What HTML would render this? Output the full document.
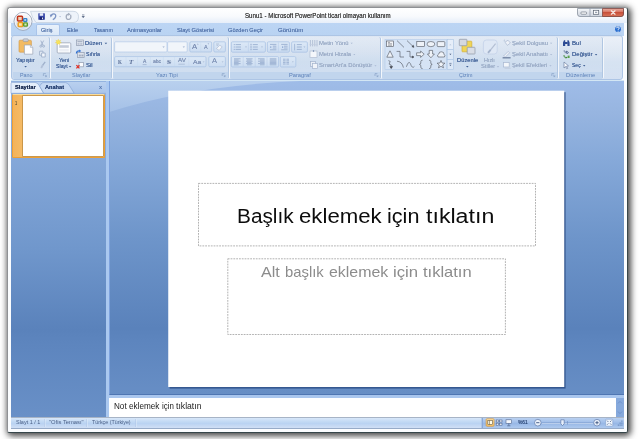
<!DOCTYPE html>
<html><head><meta charset="utf-8"><title>Sunu1 - Microsoft PowerPoint</title>
<style>
*{margin:0;padding:0;box-sizing:border-box}
html,body{width:640px;height:439px;overflow:hidden;background:#fff;font-family:"Liberation Sans","DejaVu Sans",sans-serif}
#root{position:relative;width:640px;height:439px;background:#fff;overflow:hidden}
.a{position:absolute}
.t{position:absolute;white-space:nowrap;line-height:1;transform-origin:0 50%;display:block}
.s{text-shadow:0 0 .6px currentColor}
#shadow{left:7px;top:7px;width:621px;height:426px;border-radius:4px;box-shadow:1.250px 1.250px 6px 1px rgba(0,0,0,.72)}
#win{left:7px;top:7px;width:621px;height:426px;border-radius:3px 3px 2px 2px;background:#fbfdff;border:1px solid;border-color:#8f9194 #3a484b #36464a #8f9194}
#title{left:8px;top:8px;width:619px;height:15px;border-radius:3px 3px 0 0;background:linear-gradient(#ffffff 0%,#f8fafd 55%,#e6eef9 100%)}
#tabs{left:11px;top:23px;width:613px;height:13px;background:linear-gradient(#bcd5f4,#b9d3f2)}
#acttab{left:36px;top:24px;width:24px;height:12px;border:1px solid #a9c4ea;border-bottom:none;border-radius:2px 2px 0 0;background:linear-gradient(#e9f1fb,#d9e7f7)}
#ribbon{left:11px;top:35px;width:612px;height:45px;background:linear-gradient(#dee7f3 0%,#d4e0ef 35%,#cbdbee 60%,#cfddf0 100%);border:1px solid #adc5e5;border-radius:3px}
.grp{position:absolute;top:37px;height:42px;border-radius:2px;background:linear-gradient(rgba(255,255,255,.15),rgba(255,255,255,.03));border-right:1px solid #b0c6e2;box-shadow:1px 0 0 rgba(255,255,255,.75)}
.glab{position:absolute;top:72px;height:7px;background:#c1d5ed;border-radius:0 0 2px 2px}
#below{left:11px;top:80px;width:613px;height:1px;background:#d3e6f4}
#leftpane{left:11px;top:81px;width:95px;height:336px;background:linear-gradient(#93b3e0 0%,#85a8d9 23%,#7097cc 50%,#5a82bb 74%,#5d85be 78%,#6990c7 100%)}
#ptabs{left:11px;top:82px;width:95px;height:12px;background:linear-gradient(#b9d0ef,#a9c4ea)}
#split{left:106px;top:81px;width:3px;height:336px;background:#aac8f0}
#leftframe{left:8px;top:23px;width:3px;height:406px;background:#fbfdff}
#main{left:109px;top:81px;width:515px;height:314px;border-left:1px solid #7da2de;border-bottom:1px solid #4f76b2;background:linear-gradient(#9fbce8 0%,#97b5e0 10%,#86a9d9 25%,#6e95ca 50%,#5a82bb 79%,#5d85be 83%,#678ec5 100%);overflow:hidden}
#mainhi{left:0;top:0;width:200px;height:32px}
#slide{left:160px;top:84px;width:412px;height:310px}
.ph{position:absolute;border:1px dotted #a2a2a2}
#notesbar{left:109px;top:395px;width:515px;height:3px;background:#a9c6ee}
#notes{left:110px;top:398px;width:506px;height:19px;background:#fff}
#nscroll{left:616px;top:398px;width:8px;height:19px;background:#86a9dc}
#status{left:11px;top:417px;width:613px;height:12px;border-top:1px solid #a7b4c6;border-bottom:1px solid #97abc8;background:linear-gradient(#d8e7f9 0%,#c3daf4 35%,#bad3f2 55%,#d0dff5 100%)}
#thumbsel{left:12px;top:94px;width:93px;height:64px;border-radius:1.500px;background:linear-gradient(90deg,#f4b35a,#f5bc68 12%,#f8cc86 100%);border:1px solid #ee9f34;border-top-color:#f8dc9c}
#thumb{left:23px;top:96px;width:80px;height:60px;background:#fff;box-shadow:0 0 0 .7px #b8863c}
svg#ic{position:absolute;left:0;top:0;width:640px;height:439px}
#statusr{left:482px;top:418px;width:142px;height:10px;background:linear-gradient(#bad1f1 0%,#a3c0ea 40%,#98b8e6 55%,#aec9ee 100%);border-left:1px solid #8aa9d8}
#ribr{left:604px;top:37px;width:18px;height:42px;background:linear-gradient(rgba(255,255,255,.38),rgba(255,255,255,.12));border-radius:0 2px 2px 0}
#texts{position:absolute;left:0;top:0;width:640px;height:439px;filter:blur(.4px)}
svg#ic{filter:blur(.35px)}

</style></head><body><div id="root">
<div class="a" id="shadow"></div>
<div class="a" id="win"></div>
<div class="a" id="title"></div>
<div class="a" id="tabs"></div>
<div class="a" id="acttab"></div>
<div class="a" id="leftframe"></div>
<div class="a" id="ribbon"></div>
<div class="grp" style="left:13px;width:37px"></div>
<div class="grp" style="left:51px;width:61px"></div>
<div class="grp" style="left:113px;width:116px"></div>
<div class="grp" style="left:230px;width:151px"></div>
<div class="grp" style="left:382px;width:176px"></div>
<div class="grp" style="left:559px;width:44px"></div>
<div class="glab" style="left:13px;width:36px"></div>
<div class="glab" style="left:51px;width:60px"></div>
<div class="glab" style="left:113px;width:115px"></div>
<div class="glab" style="left:230px;width:150px"></div>
<div class="glab" style="left:382px;width:175px"></div>
<div class="glab" style="left:559px;width:43px"></div>
<div class="a" id="ribr"></div>
<div class="a" id="below"></div>
<div class="a" id="leftpane"></div>
<div class="a" id="ptabs"></div>
<div class="a" id="split"></div>
<div class="a" id="main"><svg class="a" id="mainhi" viewBox="0 0 200 32"><defs><linearGradient id="gHi" x1="0" y1="0" x2="0" y2="1"><stop offset="0" stop-color="#b9d0ee"/><stop offset="1" stop-color="#a5c1e7"/></linearGradient></defs><path d="M0 0 V30.800 Q80 5 190 0 Z" fill="url(#gHi)"/></svg></div>
<svg class="a" id="slide" viewBox="160 84 412 310"><defs><filter id="fS" x="-5%" y="-5%" width="110%" height="110%"><feGaussianBlur stdDeviation=".7"/></filter></defs><rect x="169.600" y="92.200" width="396" height="296.400" fill="#2f4f88" opacity=".85" filter="url(#fS)"/><rect x="168.250" y="90.700" width="396" height="296.300" fill="#fff"/><g fill="none" stroke="#999" stroke-width=".75" stroke-dasharray="1.800 1"><rect x="198.500" y="183.400" width="337" height="62.500"/><rect x="227.800" y="258.800" width="277.600" height="75.700"/></g></svg>
<div class="a" id="notesbar"></div>
<div class="a" id="notes"></div>
<div class="a" id="nscroll"></div>
<div class="a" id="status"></div>
<div class="a" id="statusr"></div>
<div class="a" id="thumbsel"></div>
<div class="a" id="thumb"></div>
<svg id="ic" viewBox="0 0 640 439">
<defs>
<linearGradient id="gOrb" x1="0" y1="0" x2="0" y2="1"><stop offset="0" stop-color="#ffffff"/><stop offset=".5" stop-color="#e4e8ef"/><stop offset="1" stop-color="#c9d3e4"/></linearGradient>
<linearGradient id="gClose" x1="0" y1="0" x2="0" y2="1"><stop offset="0" stop-color="#e8b0a4"/><stop offset=".45" stop-color="#d87360"/><stop offset=".5" stop-color="#c8503a"/><stop offset="1" stop-color="#d8745a"/></linearGradient>
<linearGradient id="gCap" x1="0" y1="0" x2="0" y2="1"><stop offset="0" stop-color="#f6f8fa"/><stop offset=".5" stop-color="#e0e4ea"/><stop offset="1" stop-color="#cfd5df"/></linearGradient>
<linearGradient id="gBtn" x1="0" y1="0" x2="0" y2="1"><stop offset="0" stop-color="#dde9f7"/><stop offset="1" stop-color="#cbdcf1"/></linearGradient>
<linearGradient id="gOr" x1="0" y1="0" x2="0" y2="1"><stop offset="0" stop-color="#fce7b2"/><stop offset="1" stop-color="#f6c870"/></linearGradient>
</defs>
<!-- caption buttons -->
<g>
<path d="M577.5 8.5 H623.5 V14 Q623.5 16.5 621 16.5 H580 Q577.5 16.5 577.5 14 Z" fill="url(#gCap)" stroke="#7c8694" stroke-width=".7"/>
<path d="M602.5 8.5 H623.5 V14 Q623.5 16.5 621 16.5 H602.5 Z" fill="url(#gClose)" stroke="#7a3a30" stroke-width=".7"/>
<line x1="590" y1="8.5" x2="590" y2="16.5" stroke="#8a94a3" stroke-width=".7"/>
<rect x="581" y="12" width="5.5" height="2.2" rx=".6" fill="#fff" stroke="#5b6472" stroke-width=".6"/>
<rect x="593.5" y="10.3" width="5.2" height="4" fill="#fff" stroke="#5b6472" stroke-width=".7"/>
<rect x="595" y="11.7" width="2.2" height="1.4" fill="#9aa3b2"/>
<path d="M611.400 10.800 L615 14.200 M615 10.800 L611.400 14.200" stroke="#f7ecea" stroke-width="1.250" stroke-linecap="round"/>
</g>
<!-- quick access toolbar -->
<path d="M30.500 11.300 H73 Q78.500 11.300 78.500 16.800 Q78.500 22.500 73 22.500 H36 Q32 18 30.500 11.300 Z" fill="#eef3fa" stroke="#bfcbdb" stroke-width=".7"/>
<g>
<rect x="38.3" y="13.2" width="6.6" height="6.6" rx=".6" fill="#3546a8"/>
<rect x="39.6" y="13.2" width="3.6" height="2.6" fill="#e8ecf8"/>
<rect x="39.8" y="17" width="3.6" height="2.8" fill="#1c2470"/>
<rect x="42" y="17.5" width="1" height="1.8" fill="#dfe4f4"/>
</g>
<path d="M51 16.2 Q51.5 13.6 54 13.8 Q56.2 14.2 55.6 16.8 Q55 18.8 52.8 19.6" fill="none" stroke="#7b93c4" stroke-width="1.3"/>
<path d="M49.8 14.6 L52.6 15 L50.6 17.6 Z" fill="#7b93c4"/>
<path d="M59.3 16.2 h1.6 l-.8 1 z" fill="#8c9dbd"/>
<path d="M70.6 15 Q71.6 18.6 69 19.4 Q66.4 19.8 66.2 17 Q66.2 14.6 68.4 14.2" fill="none" stroke="#a3acbd" stroke-width="1.3"/>
<path d="M68 12.8 L70.8 14.2 L68.2 15.8 Z" fill="#a3acbd"/>
<path d="M82 14.8 h2.4 M82 16.2 h2.4 l-1.2 1.5 z" stroke="#4a5a78" stroke-width=".5" fill="#4a5a78"/>
<!-- office orb -->
<circle cx="23" cy="21.400" r="9" fill="url(#gOrb)" stroke="#9aa5b8" stroke-width=".9"/>
<circle cx="23" cy="21.400" r="7.900" fill="none" stroke="#fff" stroke-width=".7" opacity=".85"/>
<g>
<rect x="17.500" y="16.300" width="5" height="4.600" rx=".8" fill="#f3d2b8" stroke="#c2351a" stroke-width="1.500"/>
<rect x="23.600" y="18.700" width="3.200" height="2.600" rx=".6" fill="#cfe3f4" stroke="#3583c9" stroke-width="1.300"/>
<rect x="18.200" y="22.400" width="4.400" height="4.200" rx=".8" fill="#fbe7b4" stroke="#eea020" stroke-width="1.500"/>
<rect x="23.700" y="22.900" width="3.600" height="3.200" rx=".7" fill="#d6ecb8" stroke="#5d9a2a" stroke-width="1.400"/>
</g>
<!-- help -->
<circle cx="618" cy="29.2" r="3.6" fill="#2a6fd0" stroke="#e7effa" stroke-width=".8"/>
<path d="M616.6 28.2 Q616.8 26.8 618.1 26.9 Q619.5 27.1 619.2 28.3 Q618.9 29.1 618.1 29.5 V30.3 M618.1 31.1 v.7" stroke="#fff" stroke-width=".9" fill="none"/>
<!-- Paste -->
<g>
<rect x="19" y="40.200" width="12.400" height="12" rx="1" fill="#f3bb62" stroke="#cf9644" stroke-width=".6"/>
<rect x="23.2" y="38.8" width="5" height="2.8" rx=".8" fill="#c9ced8" stroke="#8b93a3" stroke-width=".5"/>
<path d="M24.4 45 H30.4 L32.8 47.4 V54.2 H24.4 Z" fill="#fdfdfe" stroke="#9aa3b4" stroke-width=".7"/>
<path d="M30.4 45 V47.4 H32.8" fill="#e3e7ee" stroke="#9aa3b4" stroke-width=".5"/>
<path d="M24.3 66 h2.6 l-1.3 1.5 z" fill="#3f5f94"/>
</g>
<!-- cut copy painter (disabled) -->
<g stroke="#9fb0cb" fill="none" stroke-width=".9">
<path d="M40.8 40.6 L43 45.4 M43.6 40.6 L41.2 45.4"/>
<circle cx="40.8" cy="46.2" r="1"/><circle cx="43.6" cy="46.2" r="1"/>
<path d="M39.6 51.2 h3.4 v4 h-3.4 z" fill="#e6edf7"/><path d="M41.6 53 h3.6 v4 h-3.6 z" fill="#f2f6fb"/>
<path d="M45.2 61.8 L42.6 65.4" stroke-width="1.4"/><path d="M42.8 65 L41.2 68" stroke-width="1.8" stroke="#b3c1d8"/>
</g>
<!-- launcher icons -->
<g stroke="#7f98c0" fill="none" stroke-width=".6">
<path d="M43.4 73.6 h2.4 M43.4 73.6 v2.4 M44.8 75 l1.4 1.4 M46.4 75.2 v1.4 h-1.4"/>
<path d="M222.2 73.6 h2.4 M222.2 73.6 v2.4 M223.6 75 l1.4 1.4 M225.2 75.2 v1.4 h-1.4"/>
<path d="M375 73.6 h2.4 M375 73.6 v2.4 M376.4 75 l1.4 1.4 M378 75.2 v1.4 h-1.4"/>
<path d="M551.8 73.6 h2.4 M551.8 73.6 v2.4 M553.2 75 l1.4 1.4 M554.8 75.2 v1.4 h-1.4"/>
</g>
<!-- New slide -->
<g>
<rect x="57.2" y="42.8" width="13.6" height="10.2" rx="1" fill="#fbfcfe" stroke="#9aa5b8" stroke-width=".8"/>
<rect x="59.2" y="45.2" width="9.6" height="2.6" fill="#c4cbd8"/>
<rect x="59.2" y="49" width="9.6" height="2.4" fill="#eceff5"/>
<path transform="translate(58.300 42.300) scale(.8) translate(-58.400 -43)" d="M58.4 39.2 l.9 2 l2.1 -.7 l-1 1.9 l1.8 1.2 l-2.2 .4 l.1 2.2 l-1.7 -1.5 l-1.7 1.5 l.1 -2.2 l-2.2 -.4 l1.8 -1.2 l-1 -1.9 l2.1 .7 z" fill="#f7e35c" stroke="#e8cb38" stroke-width=".4"/>
<path d="M68.8 66 h2.6 l-1.3 1.5 z" fill="#3f5f94"/>
</g>
<!-- Düzen -->
<g>
<rect x="76.4" y="40" width="7" height="5.6" fill="#e7ebf2" stroke="#8f9bb0" stroke-width=".7"/>
<rect x="77.4" y="41" width="5" height="1.2" fill="#a9b3c6"/>
<rect x="77.4" y="42.8" width="2.2" height="2" fill="#b9c2d3"/><rect x="80.2" y="42.8" width="2.2" height="2" fill="#b9c2d3"/>
<path d="M104.6 42.8 h2.6 l-1.3 1.5 z" fill="#3f5f94"/>
</g>
<!-- Sıfırla -->
<g>
<rect x="77.6" y="52.4" width="6.6" height="5" fill="#dfe4ec" stroke="#8f9bb0" stroke-width=".7"/>
<rect x="78.8" y="54.6" width="2" height="1.8" fill="#9fa9bc"/><rect x="81.4" y="54.6" width="2" height="1.8" fill="#9fa9bc"/>
<path d="M76.4 53.6 Q76.4 50.6 79.6 50.8" fill="none" stroke="#2d6fd2" stroke-width="1.2"/>
<path d="M79.2 49.6 L81.2 50.9 L79.2 52.2 Z" fill="#2d6fd2"/>
</g>
<!-- Sil -->
<g>
<rect x="79" y="62.6" width="4.6" height="4.2" fill="#fbfcfe" stroke="#8f9bb0" stroke-width=".7"/>
<path d="M76.4 65.2 L79.4 68.4 M79.4 65.2 L76.4 68.4" stroke="#e02a1e" stroke-width="1.2"/>
</g>
<!-- Font group boxes -->
<g fill="#f1f5fa" stroke="#b1c8e6" stroke-width=".7">
<rect x="114.6" y="41.8" width="52.4" height="10.2" rx="1"/>
<rect x="167.6" y="41.8" width="19.6" height="10.2" rx="1"/>
</g>
<path d="M162.4 46.4 h2.4 l-1.2 1.4 z M182.6 46.4 h2.4 l-1.2 1.4 z" fill="#9aaccb"/>
<g fill="url(#gBtn)" stroke="#a6c0e2" stroke-width=".7">
<rect x="189.8" y="41.8" width="21.8" height="10.2" rx="1.2"/>
<rect x="213.8" y="41.8" width="11.6" height="10.2" rx="1.2"/>
<rect x="114.6" y="56.6" width="91.4" height="10.2" rx="1.2"/>
<rect x="208.8" y="56.6" width="16.6" height="10.2" rx="1.2"/>
</g>
<g stroke="#c3d6ee" stroke-width=".4">
<path d="M200.7 42.4 v9 M126 57.2 v9 M137.6 57.2 v9 M150.4 57.2 v9 M163.4 57.2 v9 M174.6 57.2 v9 M188.8 57.2 v9"/>
</g>
<path d="M142.6 64.6 h4" stroke="#8fa3c2" stroke-width=".6"/>
<path d="M154 62 h7 M166.8 62 h4.6 M178.4 64.2 h6.4" stroke="#8fa3c2" stroke-width=".5"/>
<path d="M197.8 43.4 l.9 1.2 h-1.8 z M208.4 44.6 l-.9 -1.2 h1.8 z" fill="#8fa3c2"/>
<path d="M202.6 61.4 h2 l-1 1.2 z M221.6 61.4 h2 l-1 1.2 z" fill="#a5b6d2"/>
<path d="M216.4 48.6 l3.4 -3.4 l2.4 1.6 l-3 3.6 z" fill="#f2f5fa" stroke="#a9b7cf" stroke-width=".6"/>
<path d="M216 44 h3 M216.6 45.4 h1.6" stroke="#9fb0cb" stroke-width=".6"/>
<!-- Paragraph boxes -->
<g fill="url(#gBtn)" stroke="#a6c0e2" stroke-width=".7">
<rect x="231.4" y="41.8" width="34" height="10.4" rx="1.2"/>
<rect x="267.4" y="41.8" width="22" height="10.4" rx="1.2"/>
<rect x="291.6" y="41.8" width="15.8" height="10.4" rx="1.2"/>
<rect x="231.4" y="56.6" width="47.2" height="10.4" rx="1.2"/>
<rect x="280.4" y="56.6" width="15.4" height="10.4" rx="1.2"/>
</g>
<g stroke="#b4c9e6" stroke-width=".5"><path d="M248.4 42.4 v9.2 M278.4 42.4 v9.2 M243.2 57.2 v9.2 M255.2 57.2 v9.2 M267 57.2 v9.2"/></g>
<g stroke="#92a8cb" stroke-width=".8">
<path d="M235.6 44.6 h5.4 M235.6 47 h5.4 M235.6 49.4 h5.4 M252.8 44.6 h5 M252.8 47 h5 M252.8 49.4 h5"/>
<path d="M233.8 44.6 h.9 M233.8 47 h.9 M233.8 49.4 h.9 M251 43.8 v1.6 M251 46.2 v1.6 M251 48.6 v1.6" stroke="#7f97c0"/>
<path d="M270 44.4 h6.4 M272.8 46.2 h3.6 M272.8 48 h3.6 M270 49.8 h6.4 M281.2 44.4 h6.4 M284 46.2 h3.6 M284 48 h3.6 M281.2 49.8 h6.4"/>
<path d="M296.8 44.6 h5 M296.8 47 h5 M296.8 49.4 h5"/>
<path d="M294.6 43.8 v6.6" stroke-width=".7"/>
<path d="M234 58.800 h6.600 M234 60 h4.600 M234 61.200 h6.600 M234 62.400 h4.600 M234 63.600 h6.600 M234 64.800 h4.600"/>
<path d="M246 58.800 h6.600 M247 60 h4.600 M246 61.200 h6.600 M247 62.400 h4.600 M246 63.600 h6.600 M247 64.800 h4.600"/>
<path d="M258 58.800 h6.600 M260 60 h4.600 M258 61.200 h6.600 M260 62.400 h4.600 M258 63.600 h6.600 M260 64.800 h4.600"/>
<path d="M269.800 58.800 h6.600 M269.800 60 h6.600 M269.800 61.200 h6.600 M269.800 62.400 h6.600 M269.800 63.600 h6.600 M269.800 64.800 h6.600"/>
<path d="M283 59.2 h2.6 M283 60.8 h2.6 M283 62.4 h2.6 M283 64 h2.6 M286.4 59.2 h2.6 M286.4 60.8 h2.6 M286.4 62.4 h2.6 M286.4 64 h2.6"/>
</g>
<path d="M271.2 46.2 v1.8 l-1.4 -.9 z M282.2 46.2 v1.8 l1.4 -.9 z" fill="#6f8cc0"/>
<path d="M245 46.6 h2 l-1 1.2 z M261 46.6 h2 l-1 1.2 z M303.4 46.6 h2 l-1 1.2 z M291.8 61.4 h2 l-1 1.2 z" fill="#a5b6d2"/>
<!-- text direction etc icons (disabled) -->
<g stroke="#a3b3cc" fill="none" stroke-width=".7">
<path d="M310.4 40 v6.4 M312.6 40 v6.4 M314.8 40 v6.4 M317 40 v6.4" />
<path d="M309.6 44.6 h8.2" stroke="#c1cde0"/>
<rect x="310" y="51" width="7" height="6.6" fill="#f4f7fb" stroke="#b0bdd2"/>
<path d="M313.5 50 v2" stroke="#8ea0bf" stroke-width="1.2"/>
<rect x="310.6" y="61.6" width="5" height="5" fill="#e9eef6"/><rect x="312.6" y="63.6" width="5" height="5" fill="#f1f4f9"/>
</g>
<path d="M350.6 42.8 h2.2 l-1.1 1.3 z M353.2 54 h2.2 l-1.1 1.3 z M374.4 65.2 h2.2 l-1.1 1.3 z" fill="#a9b9d3"/>
<!-- shapes gallery -->
<rect x="385" y="39.4" width="61.6" height="30" fill="#d5e3f5" stroke="#b4cbe8" stroke-width=".6"/>
<g stroke="#50555f" fill="none" stroke-width=".62">
<rect x="386.6" y="41" width="6.8" height="5.6" fill="#f3f5f8"/><path d="M388 42.4 h2 M388 43.8 h4 M388 45.2 h4" stroke-width=".5"/>
<path d="M397 40.6 L404 47.4"/>
<path d="M407 40.6 L413.6 47"/><path d="M413.9 47.3 l-2 -.6 l1.4 -1.4 z" fill="#33363e"/>
<rect x="416.8" y="41.6" width="7.6" height="5" fill="#eef2f8"/>
<ellipse cx="430.9" cy="44.1" rx="3.9" ry="2.6" fill="#eef2f8"/>
<rect x="437.2" y="41.6" width="7.6" height="5" rx=".8" fill="#eef2f8"/>
<path d="M390 50.8 L393.2 57.2 H386.8 Z" fill="#eef2f8"/>
<path d="M396.6 51.4 h3.4 v5.6 h4"/>
<path d="M406.6 51.4 h3.4 v5.6 h3.2"/><path d="M414 57 l-1.8 -1 v2 z" fill="#33363e"/>
<path d="M416.6 52.8 h4 v-1.8 l3.6 3.2 l-3.6 3.2 v-1.8 h-4 z" fill="#eef2f8"/>
<path d="M429.2 50.4 h3.4 v3.6 h1.8 l-3.5 3.8 l-3.5 -3.8 h1.8 z" fill="#eef2f8"/>
<path d="M438 57 q-1.4 -2.4 .8 -3 q.2 -2.6 2.8 -2.2 q2.600 .2 2.400 2.400 q1.600 1.200 .4 2.800 z" fill="#eef2f8"/>
<path d="M388.400 60.600 q3 .6 1.200 2.200 q-1.800 1.600 1.600 2.200 v2.600"/><path d="M391.200 68.600 l-1.400 -2.200 h2.800 z" fill="#33363e"/>
<path d="M397 61.200 q5.200 .4 6.400 6.400"/>
<path d="M406.400 66.800 q2.200 -6.600 4 -3.200 q1.800 5.600 4 2.800"/>
<path d="M422.600 60.200 q-1.800 0 -1.800 1.400 v1.400 q0 1.200 -1.400 1.400 q1.400 .2 1.400 1.400 v1.400 q0 1.400 1.800 1.400"/>
<path d="M429 60.200 q1.800 0 1.800 1.400 v1.400 q0 1.200 1.400 1.400 q-1.400 .2 -1.400 1.400 v1.400 q0 1.400 -1.800 1.400"/>
<path d="M441 60.400 l1.100 2.600 l2.800 .2 l-2.200 1.800 l.8 2.800 l-2.500 -1.500 l-2.500 1.500 l.8 -2.800 l-2.200 -1.800 l2.800 -.2 z" fill="#eef2f8"/>
</g>
<g fill="#dce8f7" stroke="#a9c3e3" stroke-width=".6">
<rect x="447.200" y="39.400" width="6.400" height="10" fill="#e6eef9"/><rect x="447.200" y="49.400" width="6.400" height="10"/><rect x="447.200" y="59.400" width="6.400" height="10"/>
</g>
<path d="M449.300 45.200 h2.200 l-1.100 -1.300 z" fill="#b9c6da"/>
<path d="M449.300 53.800 h2.200 l-1.100 1.300 z M449.300 64.800 h2.200 l-1.100 1.300 z" fill="#46597d"/><path d="M449.300 63.400 h2.200" stroke="#46597d" stroke-width=".6"/>
<!-- Düzenle icon -->
<g stroke-width=".7">
<rect x="462" y="41.200" width="9.800" height="10.600" rx=".6" fill="#f0d556" stroke="#d3ad34"/>
<rect x="459.300" y="39.300" width="7.600" height="6.400" rx=".6" fill="#d5d9e1" stroke="#8d95a5"/>
<rect x="467.200" y="47.300" width="7.800" height="6.700" rx=".6" fill="#d9dde5" stroke="#8d95a5"/>
</g>
<path d="M466 66 h2.600 l-1.300 1.500 z" fill="#3f5f94"/>
<!-- Hızlı stiller -->
<rect x="483.400" y="40" width="13.800" height="14" rx="3" fill="#dfe8f5" stroke="#c0cfe6" stroke-width=".7"/>
<path d="M495.600 43.600 L490.400 50.200" stroke="#b4c0d4" stroke-width="1.200"/><path d="M490.600 49.800 L488 52.800" stroke="#a3b2cb" stroke-width="1.800"/>
<path d="M496.800 66.200 h2.400 l-1.200 1.400 z" fill="#a3b4cf"/>
<!-- shape fill / outline / effects icons -->
<g stroke="#a9b8d0" fill="#eef2f8" stroke-width=".7">
<path d="M505 42.200 l3 -2 l2.400 2.800 l-3 2.400 z"/><path d="M504.400 41.600 q-1 -1.600 .6 -1.800" fill="none"/>
<path d="M503.600 56 l4.600 -4.600 l1.400 1.400 l-4.600 4.600 z"/>
<rect x="503.600" y="62.600" width="5.600" height="4.400" fill="#f3f6fa"/>
</g>
<path d="M502.600 57.800 h8" stroke="#6d7f9f" stroke-width="1.300"/>
<path d="M504.600 68.200 h6" stroke="#c0cadb" stroke-width="1"/>
<path d="M550 42.800 h2.200 l-1.100 1.300 z M550 54 h2.200 l-1.100 1.300 z M549.400 65.200 h2.200 l-1.100 1.300 z" fill="#a9b9d3"/>
<!-- Bul / Değiştir / Seç -->
<g>
<path d="M563 46 v-3.400 l1 -2.400 h1.200 v5.800 z M569.600 46 v-3.400 l-1 -2.400 h-1.200 v5.800 z" fill="#2b4a94"/><rect x="565" y="42" width="2.600" height="2" fill="#2b4a94"/>
<path d="M563.600 51 q1.400 -.6 1.600 .8 v1.400 M566.600 50.800 v2.600 q1.800 .4 1.800 -1 q-.2 -1 -1.800 -.6" stroke="#32487a" stroke-width=".7" fill="none"/>
<path d="M564 55 q-.6 2.400 1.800 2.600" stroke="#3f8a36" stroke-width=".9" fill="none"/><path d="M565.600 56.400 l2 1.200 l-2 1.200 z" fill="#3f8a36"/>
<path d="M567.600 55.600 h2 v2.400 h-2 z" fill="#5aa04c"/>
<path d="M564 62 v6 l1.600 -1.400 l1.200 2.200 l.9 -.5 l-1.200 -2.100 l2 -.3 z" fill="#fafbfd" stroke="#5d6f95" stroke-width=".6"/>
<path d="M594.900 54 h2.400 l-1.200 1.400 z M583 65 h2.400 l-1.200 1.400 z" fill="#3f5f94"/>
</g>
<!-- pane tabs -->
<path d="M11 93.400 V83.600 Q11 82.400 12.400 82.400 H35 Q37.400 82.600 39 85.200 L43.800 93.400 Z" fill="#e4eefa" stroke="#7f9fd0" stroke-width=".6"/>
<path d="M39.600 86 L42 83 Q42.600 82.600 44 82.600 H65.600 Q67.800 82.800 69.400 85.400 L74.200 93.400 H43.800 Z" fill="#c6d9f3" stroke="#7f9fd0" stroke-width=".6"/>
<path d="M11 93.400 H106" stroke="#86a6d6" stroke-width=".7"/>
<!-- notes scrollbar arrows -->
<path d="M618 403.400 l2 -2 l2 2 M618 411.600 l2 2 l2 -2" stroke="#6d90c9" stroke-width=".9" fill="none"/>
<!-- status separators -->
<g stroke="#9db9df" stroke-width=".6"><path d="M44.500 419 v8 M86.700 419 v8 M135.700 419 v8 M481.500 418 v10"/></g>
<g stroke="#eaf2fc" stroke-width=".6"><path d="M45.100 419 v8 M87.300 419 v8 M136.300 419 v8"/></g>
<!-- view buttons -->
<rect x="486.200" y="418.800" width="7.800" height="7.400" rx=".8" fill="url(#gOr)" stroke="#d9922b" stroke-width=".7"/>
<rect x="487.800" y="420.400" width="4.800" height="4.200" fill="#fffbe9" stroke="#6b5a3a" stroke-width=".6"/><path d="M489.400 420.400 v4.200" stroke="#6b5a3a" stroke-width=".6"/>
<g fill="#f3f7fc" stroke="#4f648d" stroke-width=".6">
<rect x="496.200" y="420" width="2.400" height="2"/><rect x="499.600" y="420" width="2.400" height="2"/><rect x="496.200" y="423.200" width="2.400" height="2"/><rect x="499.600" y="423.200" width="2.400" height="2"/>
<rect x="506" y="419.800" width="5.600" height="3.600"/>
</g>
<path d="M508.800 423.400 v2.200 M507.200 425.800 h3.200" stroke="#4f648d" stroke-width=".7"/>
<!-- zoom slider -->
<circle cx="537.800" cy="422.700" r="3.300" fill="#eaf1fb" stroke="#5b77a8" stroke-width=".7"/><path d="M536.200 422.700 h3.200" stroke="#3d5580" stroke-width=".9"/>
<path d="M542 422.900 H593" stroke="#6f8fc2" stroke-width=".6"/><path d="M542 423.500 H593" stroke="#e4eefb" stroke-width=".5"/>
<path d="M567.500 421 v3.600" stroke="#6f8fc2" stroke-width=".6"/>
<path d="M560.800 419.800 h3.400 v4 l-1.700 1.800 l-1.700 -1.800 z" fill="#e8f0fb" stroke="#5b77a8" stroke-width=".7"/>
<circle cx="597" cy="422.700" r="3.300" fill="#eaf1fb" stroke="#5b77a8" stroke-width=".7"/><path d="M595.400 422.700 h3.200 M597 421.100 v3.200" stroke="#3d5580" stroke-width=".9"/>
<rect x="605.600" y="419.200" width="7.200" height="7" rx=".8" fill="#eef4fc" stroke="#7d9ccc" stroke-width=".6"/>
<path d="M607 420.600 l1.400 1.400 M611.400 420.600 l-1.400 1.400 M607 424.800 l1.400 -1.400 M611.400 424.800 l-1.400 -1.400" stroke="#4f648d" stroke-width=".8"/>
<g fill="#5577ad"><rect x="621.400" y="420.600" width="1" height="1"/><rect x="619.600" y="422.600" width="1" height="1"/><rect x="621.400" y="422.600" width="1" height="1"/><rect x="617.800" y="424.600" width="1" height="1"/><rect x="619.600" y="424.600" width="1" height="1"/><rect x="621.400" y="424.600" width="1" height="1"/></g>

</svg>

<div id="texts">
<span class="t s" style="left:245.41px;top:13.00px;font-size:6.4px;color:#404040;font-weight:400;transform:scaleX(0.9629)">Sunu1 - Microsoft PowerPoint ticari olmayan kullanım</span>
<span class="t s" style="left:41.22px;top:27.00px;font-size:6.0px;color:#5878ae;font-weight:400;transform:scaleX(0.9298)">Giriş</span>
<span class="t s" style="left:67.12px;top:27.00px;font-size:6.0px;color:#5878ae;font-weight:400;transform:scaleX(0.9515)">Ekle</span>
<span class="t s" style="left:93.91px;top:27.00px;font-size:6.0px;color:#5878ae;font-weight:400;transform:scaleX(0.8835)">Tasarım</span>
<span class="t s" style="left:126.70px;top:27.00px;font-size:6.0px;color:#5878ae;font-weight:400;transform:scaleX(0.9600)">Animasyonlar</span>
<span class="t s" style="left:176.81px;top:27.00px;font-size:6.0px;color:#5878ae;font-weight:400;transform:scaleX(0.9621)">Slayt Gösterisi</span>
<span class="t s" style="left:227.72px;top:27.00px;font-size:6.0px;color:#5878ae;font-weight:400;transform:scaleX(0.9421)">Gözden Geçir</span>
<span class="t s" style="left:277.50px;top:27.00px;font-size:6.0px;color:#5878ae;font-weight:400;transform:scaleX(1.0118)">Görünüm</span>
<span class="t s" style="left:16.20px;top:58.00px;font-size:5.6px;color:#44649a;font-weight:400;transform:scaleX(0.9885)">Yapıştır</span>
<span class="t" style="left:20.21px;top:73.00px;font-size:5.6px;color:#5c80b8;font-weight:400;transform:scaleX(0.9628)">Pano</span>
<span class="t s" style="left:58.60px;top:58.00px;font-size:5.6px;color:#44649a;font-weight:400;transform:scaleX(0.9659)">Yeni</span>
<span class="t s" style="left:55.81px;top:64.00px;font-size:5.6px;color:#44649a;font-weight:400;transform:scaleX(0.9354)">Slayt</span>
<span class="t s" style="left:85.18px;top:41.00px;font-size:5.6px;color:#44649a;font-weight:400;transform:scaleX(1.0599)">Düzen</span>
<span class="t s" style="left:85.81px;top:52.00px;font-size:5.6px;color:#44649a;font-weight:400;transform:scaleX(0.9510)">Sıfırla</span>
<span class="t s" style="left:85.79px;top:63.00px;font-size:5.6px;color:#44649a;font-weight:400;transform:scaleX(1.0741)">Sil</span>
<span class="t" style="left:72.20px;top:73.00px;font-size:5.6px;color:#5c80b8;font-weight:400;transform:scaleX(0.9833)">Slaytlar</span>
<span class="t" style="left:155.90px;top:73.00px;font-size:5.6px;color:#5c80b8;font-weight:400;transform:scaleX(1.0378)">Yazı Tipi</span>
<span class="t" style="left:289.09px;top:73.00px;font-size:5.6px;color:#5c80b8;font-weight:400;transform:scaleX(1.0179)">Paragraf</span>
<span class="t s" style="left:319.08px;top:41.00px;font-size:5.6px;color:#9aabc6;font-weight:400;transform:scaleX(1.0502)">Metin Yönü</span>
<span class="t s" style="left:319.09px;top:52.00px;font-size:5.6px;color:#9aabc6;font-weight:400;transform:scaleX(1.0362)">Metni Hizala</span>
<span class="t s" style="left:319.29px;top:63.00px;font-size:5.6px;color:#9aabc6;font-weight:400;transform:scaleX(1.0519)">SmartArt'a Dönüştür</span>
<span class="t s" style="left:456.89px;top:58.00px;font-size:5.6px;color:#44649a;font-weight:400;transform:scaleX(1.0335)">Düzenle</span>
<span class="t s" style="left:484.11px;top:58.00px;font-size:5.6px;color:#9aabc6;font-weight:400;transform:scaleX(0.9667)">Hızlı</span>
<span class="t s" style="left:481.00px;top:64.00px;font-size:5.6px;color:#9aabc6;font-weight:400;transform:scaleX(1.0191)">Stiller</span>
<span class="t s" style="left:512.19px;top:41.00px;font-size:5.6px;color:#9aabc6;font-weight:400;transform:scaleX(1.0556)">Şekil Dolgusu</span>
<span class="t s" style="left:512.19px;top:52.00px;font-size:5.6px;color:#9aabc6;font-weight:400;transform:scaleX(1.0502)">Şekil Anahattı</span>
<span class="t s" style="left:512.19px;top:63.00px;font-size:5.6px;color:#9aabc6;font-weight:400;transform:scaleX(1.0366)">Şekil Efektleri</span>
<span class="t" style="left:458.81px;top:73.00px;font-size:5.6px;color:#5c80b8;font-weight:400;transform:scaleX(0.9604)">Çizim</span>
<span class="t s" style="left:571.76px;top:41.00px;font-size:5.6px;color:#44649a;font-weight:400;transform:scaleX(1.0885)">Bul</span>
<span class="t s" style="left:571.77px;top:52.00px;font-size:5.6px;color:#44649a;font-weight:400;transform:scaleX(1.0747)">Değiştir</span>
<span class="t s" style="left:572.02px;top:63.00px;font-size:5.6px;color:#44649a;font-weight:400;transform:scaleX(0.8984)">Seç</span>
<span class="t" style="left:565.79px;top:73.00px;font-size:5.6px;color:#5c80b8;font-weight:400;transform:scaleX(1.0321)">Düzenleme</span>
<span class="t" style="left:118.32px;top:59.00px;font-size:6.2px;color:#596d96;font-weight:700;font-family:'Liberation Serif',serif;transform:scaleX(0.8085)">K</span>
<span class="t" style="left:129.16px;top:59.00px;font-size:6.2px;color:#596d96;font-weight:700;font-family:'Liberation Serif',serif;font-style:italic;transform:scaleX(1.1111)">T</span>
<span class="t s" style="left:142.80px;top:59.00px;font-size:5.6px;color:#7f92b6;font-weight:400;transform:scaleX(0.8947)">A</span>
<span class="t s" style="left:152.99px;top:60.00px;font-size:4.8px;color:#7f92b6;font-weight:400;transform:scaleX(1.0485)">abc</span>
<span class="t" style="left:166.65px;top:59.00px;font-size:6.2px;color:#596d96;font-weight:700;font-family:'Liberation Serif',serif;transform:scaleX(1.1724)">S</span>
<span class="t s" style="left:177.60px;top:58.00px;font-size:5.0px;color:#7f92b6;font-weight:400;transform:scaleX(1.2571)">AV</span>
<span class="t s" style="left:192.60px;top:60.00px;font-size:5.8px;color:#7f92b6;font-weight:400;transform:scaleX(1.1718)">Aa</span>
<span class="t s" style="left:211.80px;top:58.00px;font-size:6.4px;color:#8497ba;font-weight:400;transform:scaleX(1.1628)">A</span>
<span class="t s" style="left:192.20px;top:44.00px;font-size:6.8px;color:#7f92b6;font-weight:400;transform:scaleX(1.1304)">A</span>
<span class="t s" style="left:204.00px;top:45.00px;font-size:5.4px;color:#7f92b6;font-weight:400;transform:scaleX(1.0000)">A</span>
<span class="t s" style="left:14.80px;top:85.00px;font-size:5.8px;color:#1d2f55;font-weight:700;transform:scaleX(0.9904)">Slaytlar</span>
<span class="t s" style="left:44.90px;top:85.00px;font-size:5.8px;color:#2c4677;font-weight:700;transform:scaleX(0.9680)">Anahat</span>
<span class="t" style="left:99.20px;top:84.00px;font-size:6.2px;color:#5577b0;font-weight:700;transform:scaleX(0.9143)">x</span>
<span class="t s" style="left:15.34px;top:100.00px;font-size:6.2px;color:#7a6238;font-weight:400;transform:scaleX(0.6429)">1</span>
<span class="t" style="left:237.09px;top:206.00px;font-size:20.0px;color:#0c0c0c;font-weight:400;transform:scaleX(1.0404)">Başlık</span>
<span class="t" style="left:299.41px;top:206.00px;font-size:20.0px;color:#0c0c0c;font-weight:400;transform:scaleX(1.1102)">eklemek</span>
<span class="t" style="left:387.40px;top:206.00px;font-size:20.0px;color:#0c0c0c;font-weight:400;transform:scaleX(1.0805)">için</span>
<span class="t" style="left:426.45px;top:206.00px;font-size:20.0px;color:#0c0c0c;font-weight:400;transform:scaleX(1.1587)">tıklatın</span>
<span class="t" style="left:260.90px;top:265.00px;font-size:14.2px;color:#8c8c8c;font-weight:400;transform:scaleX(1.1315)">Alt</span>
<span class="t" style="left:284.66px;top:265.00px;font-size:14.2px;color:#8c8c8c;font-weight:400;transform:scaleX(1.0442)">başlık</span>
<span class="t" style="left:329.03px;top:265.00px;font-size:14.2px;color:#8c8c8c;font-weight:400;transform:scaleX(1.1208)">eklemek</span>
<span class="t" style="left:393.04px;top:265.00px;font-size:14.2px;color:#8c8c8c;font-weight:400;transform:scaleX(1.1789)">için</span>
<span class="t" style="left:423.47px;top:265.00px;font-size:14.2px;color:#8c8c8c;font-weight:400;transform:scaleX(1.1637)">tıklatın</span>
<span class="t" style="left:113.84px;top:402.00px;font-size:8.6px;color:#1a1a1a;font-weight:400;transform:scaleX(0.9454)">Not</span>
<span class="t" style="left:129.02px;top:402.00px;font-size:8.6px;color:#1a1a1a;font-weight:400;transform:scaleX(0.9490)">eklemek</span>
<span class="t" style="left:161.84px;top:402.00px;font-size:8.6px;color:#1a1a1a;font-weight:400;transform:scaleX(0.9227)">için</span>
<span class="t" style="left:176.20px;top:402.00px;font-size:8.6px;color:#1a1a1a;font-weight:400;transform:scaleX(1.0060)">tıklatın</span>
<span class="t" style="left:15.50px;top:420.00px;font-size:5.6px;color:#4a5f86;font-weight:400;transform:scaleX(0.9801)">Slayt 1 / 1</span>
<span class="t" style="left:48.89px;top:420.00px;font-size:5.6px;color:#4a5f86;font-weight:400;transform:scaleX(1.0377)">"Ofis Teması"</span>
<span class="t" style="left:92.11px;top:420.00px;font-size:5.6px;color:#4a5f86;font-weight:400;transform:scaleX(0.9482)">Türkçe (Türkiye)</span>
<span class="t s" style="left:518.13px;top:420.00px;font-size:5.6px;color:#35507f;font-weight:400;transform:scaleX(0.8709)">%61</span>
</div>
</div></body></html>
